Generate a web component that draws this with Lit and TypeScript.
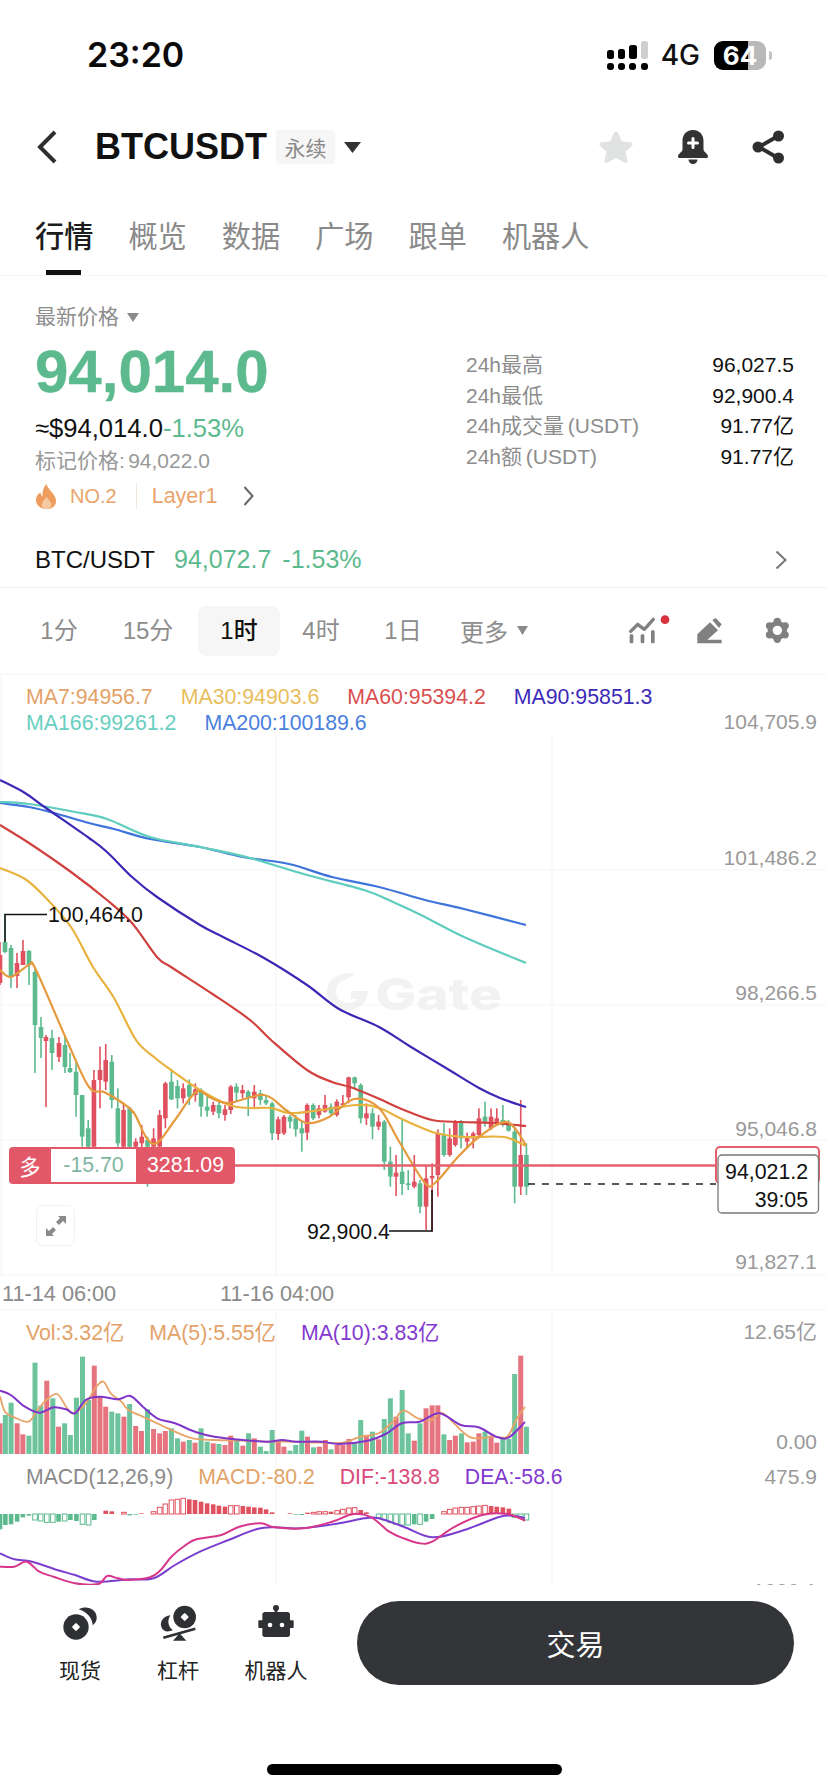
import { LitElement, html, css, svg } from "lit";
import { customElement } from "lit/decorators.js";

const GREEN = "#5dba8e";
const RED = "#e0515f";

// [x, green?, top, bottom, high, low] in page pixels
const candlesPx: number[][] = [
  [0,0,955,983,942,985],[5,1,942,952,914,953],[11,1,948,976,945,988],[17,0,963,976,953,988],[23,0,951,965,940,965],[29,1,951,965,950,985],
  [35,1,972,1025,967,1073],[41,1,1027,1038,1017,1058],[46,0,1037,1041,1035,1107],[52,1,1038,1053,1030,1070],[59,0,1043,1057,1037,1062],
  [65,1,1045,1067,1037,1073],[70,1,1068,1072,1053,1073],
];
// [zoom x, green?, top, bottom, high, low] in zoom coordinates
const candlesZ: number[][] = [
  [213,1,95,165,60,230],[230,1,165,290,165,320],[247,1,265,320,240,325],[263,0,120,320,90,320],[280,0,90,120,20,205],[296,0,60,125,12,150],[313,1,65,180,45,205],
  [330,1,205,310,145,320],[346,0,210,320,195,325],[363,1,205,320,200,325],[380,0,305,320,295,325],[397,0,290,310,255,325],[413,1,300,320,290,440],[430,0,295,320,265,325],
  [447,0,225,320,210,325],[463,0,130,235,125,265],[480,1,125,178,90,180],[497,1,138,175,120,205],[513,0,145,175,130,190],[530,1,135,170,118,195],[547,0,148,165,130,185],
  [563,1,150,200,145,230],[580,1,200,212,170,230],[597,0,195,215,185,225],[613,1,195,220,180,235],[630,0,208,225,195,242],[646,0,140,210,135,222],[662,1,140,158,130,185],
  [679,0,150,160,135,175],[695,1,155,172,150,228],[712,0,155,175,135,205],[729,1,160,180,150,195],[745,1,180,190,165,195],[762,1,190,280,185,300],[779,0,238,282,230,300],
  [795,0,230,280,225,285],[812,1,230,245,225,265],[828,1,235,268,225,290],[845,1,265,280,245,335],[860,0,195,278,190,300],[877,1,195,235,190,240],[893,0,205,225,195,235],
  [910,0,195,215,165,218],[927,1,200,220,190,225],[943,0,185,225,178,230],[960,0,190,195,165,200],[976,0,112,172,110,190],[993,1,112,130,110,145],[1010,1,135,235,130,250],
  [1026,0,220,235,190,255],[1043,1,220,260,205,298],[1060,0,245,260,225,270],[1076,1,245,365,240,390],[1093,1,365,410,320,440],[1109,0,398,410,345,468],[1126,1,395,432,240,465],
  [1143,1,430,435,390,450],[1160,0,425,440,345,445],[1176,1,430,500,420,520],[1193,0,415,500,375,570],[1210,0,408,415,370,575],[1226,0,280,405,268,470],[1243,1,285,345,250,350],
  [1259,0,295,345,265,350],[1275,0,245,315,240,320],[1291,1,245,295,240,325],[1308,0,290,305,278,325],[1325,0,280,295,275,325],[1341,0,235,285,205,290],[1358,1,230,245,185,260],
  [1375,0,230,265,205,270],[1391,0,235,250,205,255],[1408,1,240,255,195,260],[1424,1,250,272,240,275],[1441,1,275,440,260,490],[1458,0,345,440,180,465],[1474,1,345,440,310,465],
];

const ma90 = "0,780 25,793 46,808 89,838 107,852 132,877 157,897 200,925 225,938 264,958 307,985 339,1009 379,1027 411,1047 446,1068 479,1088 500,1098 526,1107";
const ma200 = "0,803 29,807 54,813 89,823 114,829 150,839 200,847 243,857 289,864 332,877 379,887 425,900 464,909 526,925";
const ma166 = "0,802 29,804 75,812 107,819 150,837 200,847 250,858 307,875 364,890 393,902 421,915 464,937 526,963";
const ma60 = "0,825 29,843 71,872 107,900 132,923 157,957 171,967 214,995 250,1020 271,1040 307,1070 332,1082 350,1087 375,1097 404,1110 432,1120 461,1122 493,1123 526,1126";
const ma30 = "0,868 25,879 46,898 71,927 93,967 114,998 136,1040 154,1057 171,1070 200,1090 229,1105 250,1108 271,1108 289,1113 314,1111 357,1105 379,1108 404,1120 436,1133 464,1137 504,1137 526,1146";
const ma7 = "0,970 11,977 29,965 36,970 68,1043 89,1087 104,1092 121,1102 134,1113 146,1137 157,1143 175,1120 196,1092 211,1098 229,1103 264,1095 286,1110 307,1123 329,1117 354,1099 379,1108 400,1143 425,1183 436,1182 457,1158 479,1137 507,1122 526,1145";

const volBars = "0:400r 15:375g 31:338g 48:400r 64:433r 81:437g 98:218g 114:347g 131:272r 148:325g 164:410r 181:400g 197:435g 214:323g 231:200g 248:330g 264:227r 280:320r 296:350r 313:365g 330:370g 347:380r 363:342g 380:408r 396:423r 413:358g 430:417r 447:430r 463:423r 480:415g 497:445g 513:455r 530:450g 546:458r 563:415g 580:455g 597:460r 613:462g 630:465r 646:437r 663:450g 680:467r 696:430g 712:445r 729:470g 745:483g 762:420g 779:455r 795:470r 812:482g 828:465g 845:422g 861:440r 878:472g 894:470r 911:450r 927:478g 944:465r 960:465r 977:447r 993:460g 1010:390g 1026:435r 1043:425g 1060:448r 1076:387g 1093:325g 1109:380r 1126:300g 1143:430g 1160:452r 1176:400g 1193:355r 1210:346r 1226:346r 1243:433g 1259:450r 1275:437r 1292:430g 1308:457r 1325:455r 1341:430r 1358:425g 1375:437r 1391:458r 1408:447g 1425:447g 1441:252g 1458:197r 1474:410g";
const volMa5 = "0,318 14,365 40,382 80,395 105,360 130,330 160,312 185,350 205,370 240,340 270,290 290,275 310,310 340,335 360,360 400,380 450,405 490,425 540,445 600,450 680,452 750,455 820,455 900,458 960,458 1010,440 1060,430 1100,395 1130,362 1170,385 1210,390 1240,370 1300,430 1330,445 1380,440 1420,440 1445,390 1470,350";
const volMa10 = "0,302 30,315 70,350 110,368 150,352 185,358 210,370 240,330 280,320 330,328 365,318 400,350 440,385 490,400 550,427 600,440 680,450 750,455 790,450 830,455 900,455 950,462 1030,452 1080,432 1125,400 1175,395 1230,370 1290,405 1340,412 1390,440 1425,442 1470,396";

const hist = "0:718g 15:705g 31:703g 48:695g 64:682g 81:677g 98:690G 114:693G 131:697G 148:697G 164:695g 181:693G 197:690g 214:693g 231:703G 248:705G 264:690g 296:662r 313:664r 347:667R 363:676g 380:674g 396:670r 430:665R 447:652R 463:642R 480:630R 497:628R 513:625R 530:628r 546:630r 563:635r 580:640r 597:643r 613:647r 630:650r 646:647R 663:647R 680:648r 696:650r 712:652r 729:653r 745:658r 762:667r 812:670r 828:674g 845:675g 861:668r 878:667R 894:665R 911:665R 927:665r 944:662R 960:658R 977:654R 993:653R 1010:660r 1026:667r 1060:683G 1076:690G 1093:698G 1109:703G 1126:705G 1143:705G 1160:703g 1176:703G 1193:695g 1210:687g 1243:665R 1259:658R 1275:654R 1292:652R 1308:652R 1325:650R 1341:648R 1358:646R 1375:648r 1391:650r 1408:652r 1425:656r 1441:682G 1458:680G 1474:690G";
const dif = "0,830 40,830 75,815 110,845 150,860 210,880 275,882 300,858 330,865 360,870 420,862 450,840 480,800 520,765 550,748 620,735 670,710 730,700 770,712 850,715 930,695 990,672 1040,682 1090,725 1130,745 1175,760 1210,755 1270,712 1350,675 1420,672 1470,692";
const dea = "0,790 40,808 90,815 160,840 210,855 270,875 360,868 430,865 490,825 560,785 640,750 720,717 770,712 840,715 950,700 1020,685 1060,685 1130,710 1210,742 1300,720 1400,680 1440,678 1470,685";

const zx = (z: number) => z / 2.8;
const zy = (z: number, base: number) => base + z / 3;

function pts(s: string, conv?: (x: number, y: number) => [number, number]): [number, number][] {
  return s.split(" ").map((p) => {
    const [x, y] = p.split(",").map(Number);
    return conv ? conv(x, y) : ([x, y] as [number, number]);
  });
}
function smooth(p: [number, number][]): string {
  let d = `M${p[0][0]} ${p[0][1]}`;
  for (let i = 0; i < p.length - 1; i++) {
    const a = p[Math.max(i - 1, 0)], b = p[i], c = p[i + 1], e = p[Math.min(i + 2, p.length - 1)];
    const c1x = b[0] + (c[0] - a[0]) / 6, c1y = b[1] + (c[1] - a[1]) / 6;
    const c2x = c[0] - (e[0] - b[0]) / 6, c2y = c[1] - (e[1] - b[1]) / 6;
    d += ` C${c1x.toFixed(1)} ${c1y.toFixed(1)} ${c2x.toFixed(1)} ${c2y.toFixed(1)} ${c[0].toFixed(1)} ${c[1].toFixed(1)}`;
  }
  return d;
}
const lowerConv = (x: number, y: number): [number, number] => [zx(x), zy(y, 1290)];

function candle(x: number, g: number, t: number, b: number, h: number, l: number) {
  const col = g ? GREEN : RED;
  return svg`<rect x=${x - 0.8} y=${h} width="1.6" height=${l - h} fill=${col}></rect><rect x=${x - 2.3} y=${t} width="4.6" height=${Math.max(b - t, 1.5)} fill=${col}></rect>`;
}

const axis: [number, string][] = [[722, "104,705.9"], [858, "101,486.2"], [993, "98,266.5"], [1129, "95,046.8"], [1262, "91,827.1"], [1332, "12.65亿"], [1442, "0.00"], [1477, "475.9"], [1591, "1000.1"]];

@customElement("app-root")
export class AppRoot extends LitElement {
  static styles = css`
    :host {
      display: block; width: 828px; height: 1792px; overflow: hidden; background: #fff; color: #111;
      font-family: "Liberation Sans", "Noto Sans CJK SC", sans-serif;
    }
    svg { display: block; }
    .status { height: 110px; display: flex; align-items: flex-start; padding: 37px 56px 0 87px; box-sizing: border-box; }
    .time { font: 600 34px/36px Inter, sans-serif; color: #0a0a0a; }
    .status-right { margin-left: auto; display: flex; align-items: center; height: 36px; }
    .net { font: 500 28px/36px Inter, sans-serif; margin: 0 14px 0 13px; color: #111; }
    .batt { position: relative; width: 52px; height: 29px; border-radius: 9px; overflow: hidden; background: #b9b9b9; display: flex; align-items: center; justify-content: center; color: #fff; font: 700 26px/29px Inter, sans-serif; }
    .batt i { position: absolute; left: 0; top: 0; bottom: 0; width: 34px; background: #000; }
    .batt span { position: relative; }
    .cap { width: 3px; height: 9px; background: #c4c4c4; border-radius: 0 3px 3px 0; margin-left: 3px; }

    .head { height: 74px; display: flex; align-items: center; padding: 0 43px 0 37px; }
    .title { font-size: 36px; font-weight: 700; margin-left: 38px; color: #111; }
    .kind { margin-left: 9px; width: 59px; height: 34px; background: #f6f6f6; border-radius: 4px; color: #8a8a8a; font-size: 21px; display: flex; align-items: center; justify-content: center; }
    .caret { margin-left: 9px; }
    .head-icons { margin-left: auto; display: flex; align-items: center; gap: 43px; }

    .tabs { height: 92px; display: flex; gap: 35px; padding: 35px 0 0 35px; box-sizing: border-box; border-bottom: 1px solid #f5f5f5; }
    .tab { position: relative; font-size: 29.2px; line-height: 36px; height: 36px; color: #8a8a8a; }
    .tab.on { color: #1c1c1c; font-weight: 500; }
    .tab.on::after { content: ""; position: absolute; left: 11px; width: 35px; height: 5px; top: 51px; background: #111; }

    .stats { display: flex; justify-content: space-between; padding: 24px 34px 0 35px; height: 256px; box-sizing: border-box; }
    .label { font-size: 21px; line-height: 32px; height: 32px; padding-top: 1px; box-sizing: content-box; margin-bottom: -1px; color: #8d8d8d; display: flex; align-items: center; gap: 8px; }
    .price { font-size: 60px; font-weight: 700; line-height: 80px; color: ${css([GREEN] as any)}; -webkit-text-stroke: 0.4px ${css([GREEN] as any)}; }
    .sub { font-size: 25.6px; line-height: 32px; }
    .up { color: ${css([GREEN] as any)}; }
    .mark { font-size: 21px; line-height: 34px; color: #999; word-spacing: -2.5px; }
    .tags { display: flex; align-items: center; height: 34px; margin-top: 1px; color: #e9a46c; }
    .no { font-size: 20px; margin-left: 13px; }
    .sep { width: 1px; height: 26px; background: #f1e6dc; margin: 0 15px 0 19px; }
    .layer { font-size: 21.5px; }
    .tags svg.chev { margin-left: 26px; }
    .figures { width: 328px; padding-top: 50px; }
    .fig { display: flex; justify-content: space-between; height: 30.6px; line-height: 30.6px; font-size: 21px; color: #8d8d8d; word-spacing: -2px; }
    .fig b { font-weight: 400; color: #111; }

    .pair { height: 56px; display: flex; align-items: center; padding: 0 41px 0 35px; font-size: 24px; box-sizing: border-box; border-bottom: 1px solid #f2f2f2; }
    .pair .g { color: ${css([GREEN] as any)}; font-size: 25px; }
    .pair .a { margin-left: 19px; }
    .pair .b { margin-left: 11px; }
    .pair svg { margin-left: auto; }

    .periods { height: 85px; display: flex; align-items: center; padding-left: 18px; padding-right: 38px; }
    .p { width: 82px; height: 50px; line-height: 50px; text-align: center; font-size: 24px; color: #8d8d8d; border-radius: 8px; }
    .p:nth-child(2) { margin-left: 7px; }
    .p:nth-child(3) { margin-left: 9px; }
    .p.on { background: #f6f6f6; color: #111; font-weight: 500; }
    .more { display: flex; align-items: center; gap: 9px; padding-left: 16px; font-size: 24px; color: #8d8d8d; }
    .tools { margin-left: auto; }

    .chart { position: relative; height: 912px; overflow: hidden; }
    .plot { position: absolute; left: 0; top: 0; }
    .plot text { font-family: "Liberation Sans", "Noto Sans CJK SC", sans-serif; }
    .plot text.mark-logo { font-family: Inter, sans-serif; font-weight: 800; }
    .panels { position: relative; display: flex; flex-direction: column; }
    .main { height: 637px; padding: 11px 0 0 26px; box-sizing: border-box; }
    .vol { height: 154px; padding: 10px 0 0 26px; box-sizing: border-box; }
    .macd { padding-left: 26px; }
    .legend { display: flex; gap: 28px; font-size: 21.3px; line-height: 26px; white-space: nowrap; }
    .vol .legend { gap: 25px; }
    .macd .legend { gap: 25px; font-size: 21.2px; }
    .c7 { color: #e3a268; } .c30 { color: #e9bd5d; } .c60 { color: #d8504f; } .c90 { color: #3c2ab8; }
    .c166 { color: #68cfc0; } .c200 { color: #4a80dd; } .cg { color: #8a8a8a; } .cdif { color: #d9497a; } .cp { color: #8338cf; }

    .order { position: absolute; left: 9px; top: 474px; width: 226px; height: 37px; background: #e25868; border-radius: 4px; display: flex; align-items: center; color: #fff; font-size: 21.3px; box-sizing: border-box; padding: 2px 0; }
    .order .dir { width: 42px; text-align: center; }
    .order .pnl { width: 85px; height: 33px; line-height: 33px; background: #fff; color: #7fb5a1; text-align: center; }
    .order .val { flex: 1; text-align: center; }
    .expand { position: absolute; left: 36px; top: 532px; width: 39px; height: 41px; border: 1px solid #f1f1f1; border-radius: 7px; box-sizing: border-box; display: flex; align-items: center; justify-content: center; background: #fff; }

    .foot { height: 207px; background: #fff; display: flex; flex-direction: column; position: relative; }
    .foot-row { display: flex; padding: 16px 0 0 31px; }
    .act { width: 98px; padding-top: 1px; display: flex; flex-direction: column; align-items: center; font-size: 21px; color: #222; }
    .act span { margin-top: 15px; line-height: 28px; }
    .trade { margin-left: 32px; width: 437px; height: 84px; border-radius: 42px; background: #333539; color: #fff; font-size: 29px; display: flex; align-items: center; justify-content: center; }
    .home { width: 295px; height: 11px; border-radius: 6px; background: #000; margin: 79px auto 0; }
  `;

  private statusBar() {
    return html`<div class="status">
      <div class="time">23:20</div>
      <div class="status-right">
        <svg width="41" height="29" viewBox="0 0 41 29">
          <g fill="#000"><rect x="0" y="9" width="7" height="9" rx="2.5"></rect><rect x="11" y="8" width="7" height="10" rx="2.5"></rect><rect x="22" y="4" width="8" height="14" rx="2.5"></rect>
          <rect x="0" y="22" width="7" height="7" rx="3"></rect><rect x="11" y="22" width="7" height="7" rx="3"></rect><rect x="22" y="22" width="7" height="7" rx="3"></rect><rect x="34" y="22" width="7" height="7" rx="3"></rect></g>
          <rect x="34" y="0" width="7" height="18" rx="2.5" fill="#cfcfcf"></rect>
        </svg>
        <span class="net">4G</span>
        <div class="batt"><i></i><span>64</span></div>
        <div class="cap"></div>
      </div>
    </div>`;
  }

  private header() {
    return html`<div class="head">
      <svg width="20" height="34" viewBox="0 0 20 34"><path d="M18 2 3 17l15 15" fill="none" stroke="#2f2f2f" stroke-width="4"></path></svg>
      <div class="title">BTCUSDT</div>
      <div class="kind">永续</div>
      <svg class="caret" width="17" height="11" viewBox="0 0 17 11"><path d="M0 0h17l-8.5 11z" fill="#333"></path></svg>
      <div class="head-icons">
        <svg width="36" height="34" viewBox="0 0 36 34"><path d="M18 1.5c1 0 1.7.8 2.2 1.8l3.6 8 8.7 1c2.3.3 3 2 1.5 3.5l-6.4 6 1.8 8.500c.5 2.300-1 3.400-3 2.300L18 28l-8.400 4.500c-2 1.100-3.500 0-3-2.300l1.800-8.500-6.400-6C.500 14.300 1.200 12.600 3.500 12.300l8.700-1 3.600-8C16.300 2.300 17 1.500 18 1.500z" fill="#e1e3e3"></path></svg>
        <svg width="32" height="34" viewBox="0 0 32 34"><path d="M16 0C9 0 5.500 5 5.500 11v8.500C5.500 22 1 23.500 1 26.500c0 1 .8 1.500 2 1.500h26c1.200 0 2-.5 2-1.500 0-3-4.500-4.500-4.500-7V11C26.500 5 23 0 16 0z" fill="#333"></path><path d="M16 8.500v9M11.500 13h9" stroke="#fff" stroke-width="3" stroke-linecap="round"></path><path d="M11.500 29.500a4.500 4.500 0 0 0 9 0z" fill="#333"></path></svg>
        <svg width="33" height="34" viewBox="0 0 33 34"><path d="M26 6 7 17l19 11" fill="none" stroke="#2f2f2f" stroke-width="4"></path><circle cx="26.500" cy="6" r="5.500" fill="#2f2f2f"></circle><circle cx="6" cy="17" r="5.500" fill="#2f2f2f"></circle><circle cx="26.500" cy="28" r="5.500" fill="#2f2f2f"></circle></svg>
      </div>
    </div>`;
  }

  private stats() {
    const figs = [["24h最高", "96,027.5"], ["24h最低", "92,900.4"], ["24h成交量 (USDT)", "91.77亿"], ["24h额 (USDT)", "91.77亿"]];
    return html`<div class="stats">
      <div>
        <div class="label">最新价格 <svg width="12" height="9" viewBox="0 0 12 9"><path d="M0 0h12L6 9z" fill="#8a8a8a"></path></svg></div>
        <div class="price">94,014.0</div>
        <div class="sub">≈$94,014.0<span class="up">-1.53%</span></div>
        <div class="mark">标记价格: 94,022.0</div>
        <div class="tags">
          <svg width="22" height="25" viewBox="0 0 21 24"><path d="M11 0c1 5 8 9 9 15 1 5-3 9-9 9S0 20 1 14c.5-3 3-5 4-6 .5 2 1 3 2 4 0-5 1-9 4-12z" fill="#ee9d5e"></path><path d="M11 24c-3 0-5-2-4.500-5 .3-2 3-4 4.500-7 1.500 3 4.200 5 4.500 7 .5 3-1.500 5-4.500 5z" fill="#f6c9a2"></path></svg>
          <span class="no">NO.2</span><i class="sep"></i><span class="layer">Layer1</span>
          <svg class="chev" width="11" height="22" viewBox="0 0 11 22"><path d="m1.500 2 8 9-8 9" fill="none" stroke="#666" stroke-width="2"></path></svg>
        </div>
      </div>
      <div class="figures">${figs.map(([a, b]) => html`<div class="fig"><span>${a}</span><b>${b}</b></div>`)}</div>
    </div>`;
  }

  private periods() {
    return html`<div class="periods">
      <div class="p">1分</div><div class="p">15分</div><div class="p on">1时</div><div class="p">4时</div><div class="p">1日</div>
      <div class="more">更多 <svg width="11" height="9" viewBox="0 0 11 9"><path d="M0 0h11L5.500 9z" fill="#8a8a8a"></path></svg></div>
      <svg class="tools" width="166" height="36" viewBox="0 0 498 108">
        <g transform="translate(-40 -42)" fill="#808080">
          <path d="m60 97 21-21 20 15 27-30" fill="none" stroke="#808080" stroke-width="10" stroke-linecap="round" stroke-linejoin="round"></path>
          <rect x="57" y="106" width="11" height="27" rx="4"></rect><rect x="90" y="106" width="11" height="27" rx="4"></rect><rect x="121" y="94" width="11" height="39" rx="4"></rect>
          <circle cx="163" cy="62" r="13" fill="#d8333c"></circle>
          <path d="M260 133v-27l38-36 24 24-32 28h43v11z"></path><path d="m305 63 10-6 18 19-8 11z"></path>
          <g transform="translate(500 94)"><circle r="29"></circle><circle cx="0" cy="-27" r="11"></circle><circle cx="23.400" cy="-13.500" r="11"></circle><circle cx="23.400" cy="13.500" r="11"></circle><circle cx="0" cy="27" r="11"></circle><circle cx="-23.400" cy="13.500" r="11"></circle><circle cx="-23.400" cy="-13.500" r="11"></circle><circle r="14" fill="#fff"></circle></g>
        </g>
      </svg>
    </div>`;
  }

  private plot() {
    const lines: [string, string][] = [
      [ma200, "#3f74dc"], [ma166, "#5fcdbd"], [ma90, "#3b28b5"], [ma60, "#d0413f"], [ma30, "#e8b23e"], [ma7, "#e49a3d"],
    ];
    return svg`<svg class="plot" width="828" height="912" viewBox="0 673 828 912">
      <path d="M0 674H828M0 870H828M0 1005H828M0 1140H828M0 1275H828M0 1310H828M276 735V1275M552 735V1275M276 1310V1585M552 1310V1585M1 674V1275" stroke="#f6f6f6" stroke-width="1.200" fill="none"></path>
      <g fill="#f2f2f2">
        <path d="M349 973c-12 0-22 8-22 18.500S337 1010 348 1010s20-8 20-19h-17v8h7c-2 3-6 4-10 4-7 0-12-5-12-11.500 0-5 3-9 7-11l13-6.500z"></path>
        <text class="mark-logo" x="375" y="1010" font-size="44" textLength="127" lengthAdjust="spacingAndGlyphs">Gate</text>
      </g>
      ${candlesPx.map((c) => candle(c[0], c[1], c[2], c[3], c[4], c[5]))}
      ${candlesZ.map((c) => candle(zx(c[0]), c[1], zy(c[2], 1040), zy(c[3], 1040), zy(c[4], 1040), zy(c[5], 1040)))}
      ${lines.map(([s, col]) => svg`<path d=${smooth(pts(s))} fill="none" stroke=${col} stroke-width="2.200" stroke-linejoin="round"></path>`)}

      <path d="M5 942V914.500H47M389 1231H432V1190" fill="none" stroke="#111" stroke-width="1.500"></path>
      <text x="48" y="922" font-size="21.300" fill="#111">100,464.0</text>
      <text x="307" y="1239" font-size="21.300" fill="#111">92,900.4</text>

      <path d="M235 1165.500H716" stroke="#e4606f" stroke-width="2.500"></path>
      <path d="M528 1184H716" stroke="#222" stroke-width="1.300" stroke-dasharray="7 7"></path>
      <rect x="716" y="1147" width="103" height="36" rx="4" fill="#fff" stroke="#e4606f" stroke-width="2"></rect>
      <rect x="718" y="1155" width="100.500" height="58" rx="4" fill="#fff" stroke="#777" stroke-width="1.300"></rect>
      <text x="808" y="1179" text-anchor="end" font-size="21.300" fill="#111">94,021.2</text>
      <text x="808" y="1207" text-anchor="end" font-size="21.300" fill="#111">39:05</text>

      ${axis.map(([y, t]) => svg`<text x="817" y=${y + 7} text-anchor="end" font-size="21" fill="#999">${t}</text>`)}
      <text x="2" y="1301" font-size="21.700" fill="#8a8a8a">11-14 06:00</text>
      <text x="220" y="1301" font-size="21.700" fill="#8a8a8a">11-16 04:00</text>

      ${volBars.split(" ").map((b) => {
        const [xs, rest] = b.split(":");
        const top = parseInt(rest);
        const g = rest.endsWith("g");
        return svg`<rect x=${zx(+xs) - 2.500} y=${zy(top, 1290)} width="5" height=${zy(492, 1290) - zy(top, 1290)} fill=${g ? "#6cc39c" : "#e6747f"}></rect>`;
      })}
      <path d=${smooth(pts(volMa5, lowerConv))} fill="none" stroke="#e7a468" stroke-width="1.800"></path>
      <path d=${smooth(pts(volMa10, lowerConv))} fill="none" stroke="#8035c9" stroke-width="2"></path>

      ${hist.split(" ").map((b) => {
        const [xs, rest] = b.split(":");
        const v = parseInt(rest);
        const k = rest[rest.length - 1];
        const y0 = zy(Math.min(v, 672), 1290), y1 = zy(Math.max(v, 672), 1290);
        const col = k === "g" || k === "G" ? "#5dba8e" : "#e0515f";
        const hollow = k === "G" || k === "R";
        return svg`<rect x=${zx(+xs) - 2.300} y=${y0} width="4.600" height=${y1 - y0} fill=${hollow ? "#fff" : col} stroke=${col} stroke-width=${hollow ? 1 : 0}></rect>`;
      })}
      <path d=${smooth(pts(dea, lowerConv))} fill="none" stroke="#7b3fd0" stroke-width="2"></path>
      <path d=${smooth(pts(dif, lowerConv))} fill="none" stroke="#d8368a" stroke-width="2"></path>
    </svg>`;
  }

  private footer() {
    return html`<div class="foot">
      <div class="foot-row">
        <div class="act">
          <svg width="40" height="40" viewBox="32 20 120 120" fill="#2f3033"><circle cx="80" cy="95" r="38"></circle><rect x="71" y="86" width="18" height="18" rx="3" transform="rotate(45 80 95)" fill="#fff"></rect><path d="M88 42c22-14 57-2 54 28-1 8-6 15-12 20 0-20-18-42-42-48z"></path></svg>
          <span>现货</span>
        </div>
        <div class="act">
          <svg width="40" height="40" viewBox="325 20 120 120" fill="#2f3033"><circle cx="405" cy="65" r="34"></circle><rect x="396" y="56" width="18" height="18" rx="3" transform="rotate(45 405 65)" fill="#fff"></rect><path d="M362 60c-22 2-32 20-27 35 5 13 17 17 35 10-15-10-18-30-8-45z"></path><path d="m341 127 96-27" stroke="#2f3033" stroke-width="8"></path><path d="M370 136h40l-20-22z"></path></svg>
          <span>杠杆</span>
        </div>
        <div class="act">
          <svg width="40" height="40" viewBox="618 20 120 120" fill="#2f3033"><circle cx="678" cy="38" r="9"></circle><rect x="674" y="40" width="8" height="14"></rect><rect x="637" y="50" width="83" height="75" rx="8"></rect><rect x="625" y="75" width="106" height="23" rx="3"></rect><circle cx="660" cy="89" r="7" fill="#fff"></circle><circle cx="696" cy="89" r="7" fill="#fff"></circle></svg>
          <span>机器人</span>
        </div>
        <div class="trade">交易</div>
      </div>
      <div class="home"></div>
    </div>`;
  }

  render() {
    return html`
      ${this.statusBar()}
      ${this.header()}
      <div class="tabs">
        <div class="tab on">行情</div><div class="tab">概览</div><div class="tab">数据</div><div class="tab">广场</div><div class="tab">跟单</div><div class="tab">机器人</div>
      </div>
      ${this.stats()}
      <div class="pair">
        <span>BTC/USDT</span><span class="g a">94,072.7</span><span class="g b">-1.53%</span>
        <svg width="12" height="20" viewBox="0 0 12 20"><path d="m1.500 1.500 9 8.500-9 8.500" fill="none" stroke="#777" stroke-width="2"></path></svg>
      </div>
      ${this.periods()}
      <div class="chart">
        ${this.plot()}
        <div class="panels">
          <div class="main">
            <div class="legend"><span class="c7">MA7:94956.7</span><span class="c30">MA30:94903.6</span><span class="c60">MA60:95394.2</span><span class="c90">MA90:95851.3</span></div>
            <div class="legend"><span class="c166">MA166:99261.2</span><span class="c200">MA200:100189.6</span></div>
          </div>
          <div class="vol">
            <div class="legend"><span class="c7">Vol:3.32亿</span><span class="c7">MA(5):5.55亿</span><span class="cp">MA(10):3.83亿</span></div>
          </div>
          <div class="macd">
            <div class="legend"><span class="cg">MACD(12,26,9)</span><span class="c7">MACD:-80.2</span><span class="cdif">DIF:-138.8</span><span class="cp">DEA:-58.6</span></div>
          </div>
        </div>
        <div class="order"><span class="dir">多</span><span class="pnl">-15.70</span><span class="val">3281.09</span></div>
        <div class="expand"><svg width="22" height="22" viewBox="0 0 22 22" fill="#8a8a8a"><path d="M13 1h8v8l-3-3-4 4-3-3 4-4zM9 21H1v-8l3 3 4-4 3 3-4 4z"></path></svg></div>
      </div>
      ${this.footer()}
    `;
  }
}
